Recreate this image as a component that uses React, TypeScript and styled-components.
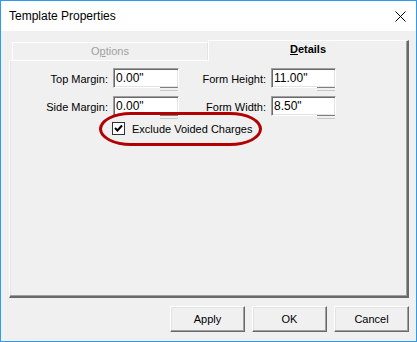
import React from 'react'
import {styled, createGlobalStyle} from 'styled-components'

const GlobalStyle = createGlobalStyle`
  html, body {
    margin: 0;
    padding: 0;
    background: #f0f0f0;
  }
  * {
    box-sizing: border-box;
  }
`

const Window = styled.div`
  width: 417px;
  height: 342px;
  border: 1px solid #2d9cf0;
  background: #f0f0f0;
  display: flex;
  flex-direction: column;
  font-family: "Liberation Sans", Arial, sans-serif;
  color: #000;
`

const TitleBar = styled.div`
  height: 30px;
  background: #fff;
  display: flex;
  align-items: center;
  justify-content: space-between;
  padding: 0 10px 0 8px;
  font-size: 12px;
`

const CloseIcon = () =>
    <svg width="11" height="11" viewBox="0 0 11 11">
        <path d="M0.5 0.5 L10.5 10.5 M10.5 0.5 L0.5 10.5" stroke="#000" strokeWidth="1" fill="none"/>
    </svg>

const Client = styled.div`
  flex: 1;
  display: flex;
  flex-direction: column;
  padding: 9px 7px 9px 8px;
`

const TabStrip = styled.div`
  display: flex;
  align-items: flex-end;
  height: 20px;
  padding-left: 3px;
`

const Tab = styled.div<{ $active?: boolean }>`
  position: relative;
  z-index: ${p => p.$active ? 2 : 1};
  width: ${p => p.$active ? 201 : 196}px;
  height: ${p => p.$active ? 21 : 18}px;
  margin-bottom: ${p => p.$active ? -1 : 0}px;
  background: #f0f0f0;
  border-top: 1px solid #fff;
  border-left: 1px solid #fff;
  border-right: ${p => p.$active ? '2px solid #696969' : '1px solid #e3e3e3'};
  box-shadow: ${p => p.$active ? 'inset -1px 0 0 #a0a0a0' : 'none'};
  font-size: 11px;
  font-weight: ${p => p.$active ? 'bold' : 'normal'};
  color: ${p => p.$active ? '#000' : '#a0a0a0'};
  display: flex;
  justify-content: center;
  padding-top: 2px;

  u {
    text-decoration: underline;
    text-underline-offset: 1px;
  }
`

const Panel = styled.div`
  height: 238px;
  border-top: 1px solid #fff;
  border-left: 1px solid #fff;
  border-right: 2px solid #696969;
  border-bottom: 2px solid #696969;
  box-shadow: inset -1px -1px 0 #a0a0a0, inset 1px 0 0 #e3e3e3;
  padding-top: 7px;
`

const FieldGrid = styled.div`
  display: grid;
  grid-template-columns: 98px 66px 82px 65px;
  column-gap: 5px;
  row-gap: 8px;
  font-size: 11px;
`

const Label = styled.label`
  display: flex;
  align-items: center;
  justify-content: flex-end;
  height: 20px;
  padding-top: 2px;
  white-space: nowrap;
`

const InputBox = styled.div`
  position: relative;
  height: 20px;
  background: #fff;
  border-style: solid;
  border-width: 1px;
  border-color: #a0a0a0 #fff #fff #a0a0a0;
  box-shadow: inset 1px 1px 0 #696969, inset -1px -1px 0 #e3e3e3;
  font-size: 12px;
  padding: 2px 0 0 2px;
  line-height: 15px;

  &::after {
    content: '';
    position: absolute;
    right: 0;
    bottom: -4px;
    width: 18px;
    height: 2px;
    border-top: 1px solid #808080;
    border-bottom: 1px solid #c8c8c8;
  }
`

const CheckRow = styled.div`
  position: relative;
  display: inline-flex;
  align-items: center;
  gap: 7px;
  margin: 6px 0 0 102px;
  font-size: 11px;
  height: 13px;
`

const CheckBox = styled.div`
  width: 13px;
  height: 13px;
  background: #fff;
  border: 1px solid #333;
  display: flex;
  align-items: center;
  justify-content: center;
`

const Highlight = styled.div`
  position: absolute;
  left: -13px;
  top: -10px;
  width: 163px;
  height: 34px;
  border: 3px solid #b20000;
  border-radius: 32px / 17px;
  pointer-events: none;
`

const ButtonRow = styled.div`
  display: flex;
  justify-content: flex-end;
  gap: 7px;
  margin-top: 8px;
`

const Button = styled.button`
  width: 75px;
  height: 26px;
  background: #f0f0f0;
  border-style: solid;
  border-width: 1px;
  border-color: #fff #696969 #696969 #fff;
  box-shadow: inset -1px -1px 0 #a0a0a0, inset 1px 1px 0 #e3e3e3;
  font-family: "Liberation Sans", Arial, sans-serif;
  font-size: 11px;
  color: #000;
  padding: 0;
`

const fields = [
    ['Top Margin:', '0.00"', 'Form Height:', '11.00"'],
    ['Side Margin:', '0.00"', 'Form Width:', '8.50"'],
]

export default function App() {
    return <>
        <GlobalStyle/>
        <Window>
            <TitleBar>
                <span>Template Properties</span>
                <CloseIcon/>
            </TitleBar>
            <Client>
                <TabStrip>
                    <Tab>O<u>p</u>tions</Tab>
                    <Tab $active><span><u>D</u>etails</span></Tab>
                </TabStrip>
                <Panel>
                    <FieldGrid>
                        {fields.map(row => <React.Fragment key={row[0]}>
                            <Label>{row[0]}</Label>
                            <InputBox>{row[1]}</InputBox>
                            <Label>{row[2]}</Label>
                            <InputBox>{row[3]}</InputBox>
                        </React.Fragment>)}
                    </FieldGrid>
                    <CheckRow>
                        <CheckBox>
                            <svg width="9" height="9" viewBox="0 0 9 9">
                                <path d="M1 4 L3.5 6.5 L8 1.5" stroke="#000" strokeWidth="2" fill="none"/>
                            </svg>
                        </CheckBox>
                        <span>Exclude Voided Charges</span>
                        <Highlight/>
                    </CheckRow>
                </Panel>
                <ButtonRow>
                    <Button>Apply</Button>
                    <Button>OK</Button>
                    <Button>Cancel</Button>
                </ButtonRow>
            </Client>
        </Window>
    </>
}
